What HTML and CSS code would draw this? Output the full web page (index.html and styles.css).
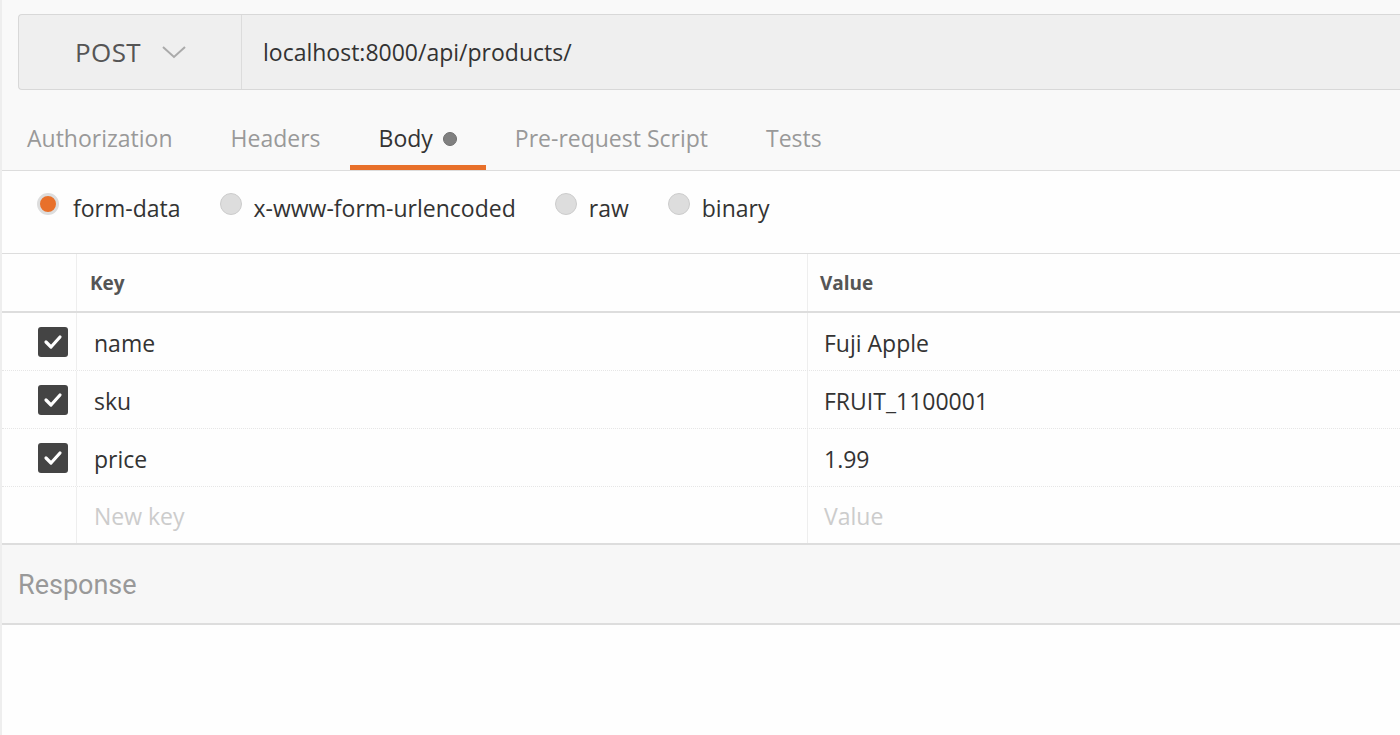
FILE: index.html
```html
<!DOCTYPE html>
<html>
<head>
<meta charset="utf-8">
<link rel="stylesheet" href="styles.css">
</head>
<body>
<div class="app">
  <div class="top">
    <div class="urlbar">
      <div class="method">
        <span>POST</span>
        <svg class="chev" width="26" height="16" viewBox="0 0 26 16"><path d="M2 3 L13 13 L24 3" fill="none" stroke="#aaa" stroke-width="2"/></svg>
      </div>
      <div class="url">localhost:8000/api/products/</div>
    </div>
    <div class="tabs">
      <div class="tab">Authorization</div>
      <div class="tab">Headers</div>
      <div class="tab active">Body <span class="dot"></span></div>
      <div class="tab">Pre-request Script</div>
      <div class="tab">Tests</div>
    </div>
  </div>
  <div class="radios">
    <label class="radio"><span class="rb on"></span>form-data</label>
    <label class="radio"><span class="rb"></span>x-www-form-urlencoded</label>
    <label class="radio"><span class="rb"></span>raw</label>
    <label class="radio"><span class="rb"></span>binary</label>
  </div>
  <div class="table">
    <div class="row head">
      <div class="c0"></div>
      <div class="c1">Key</div>
      <div class="c2">Value</div>
    </div>
    <div class="row">
      <div class="c0"><span class="cb"><svg width="20" height="16" viewBox="0 0 20 16"><path d="M3 8 L8 13 L17 3" fill="none" stroke="#fff" stroke-width="3.2" stroke-linecap="round" stroke-linejoin="round"/></svg></span></div>
      <div class="c1">name</div>
      <div class="c2">Fuji Apple</div>
    </div>
    <div class="row">
      <div class="c0"><span class="cb"><svg width="20" height="16" viewBox="0 0 20 16"><path d="M3 8 L8 13 L17 3" fill="none" stroke="#fff" stroke-width="3.2" stroke-linecap="round" stroke-linejoin="round"/></svg></span></div>
      <div class="c1">sku</div>
      <div class="c2">FRUIT_1100001</div>
    </div>
    <div class="row">
      <div class="c0"><span class="cb"><svg width="20" height="16" viewBox="0 0 20 16"><path d="M3 8 L8 13 L17 3" fill="none" stroke="#fff" stroke-width="3.2" stroke-linecap="round" stroke-linejoin="round"/></svg></span></div>
      <div class="c1">price</div>
      <div class="c2">1.99</div>
    </div>
    <div class="row last">
      <div class="c0"></div>
      <div class="c1 ph">New key</div>
      <div class="c2 ph">Value</div>
    </div>
  </div>
  <div class="response">Response</div>
  <div class="rest"></div>
</div>
</body>
</html>
```

FILE: styles.css
```css
* { box-sizing: border-box; }
html, body { margin: 0; padding: 0; }
body {
  width: 1400px;
  height: 735px;
  overflow: hidden;
  background: #fefefe;
  font-family: "Open Sans", "Liberation Sans", sans-serif;
  color: #333;
}
.app { display: flex; flex-direction: column; height: 735px; border-left: 2px solid #eee; }
.top {
  background: #f9f9f9;
  padding-top: 14px;
  padding-left: 16px;
  border-bottom: 1px solid #ddd;
}
.urlbar {
  display: flex;
  height: 76px;
  border: 1px solid #d8d8d8;
  border-right: none;
  border-radius: 4px 0 0 4px;
  background: #efefef;
}
.method {
  width: 223px;
  border-right: 1px solid #dcdcdc;
  display: flex;
  align-items: center;
  padding-left: 56px;
  gap: 20px;
  font-size: 26px;
  letter-spacing: 0.4px;
  color: #555;
}
.url {
  display: flex;
  align-items: center;
  padding-left: 21px;
  font-size: 23px;
  color: #333;
}
.tabs {
  display: flex;
  height: 80px;
  margin-left: -16px;
}
.tab {
  font-size: 23px;
  line-height: 32px;
  color: #999;
  padding: 32px 29px 0;
  height: 80px;
  display: flex;
  align-items: flex-start;
}
.tab:first-child { padding-left: 25px; }
.tab.active {
  color: #333;
  border-bottom: 5px solid #e8702a;
}
.dot {
  display: inline-block;
  width: 14px;
  height: 14px;
  border-radius: 50%;
  background: #808080;
  border: 1px solid #6f6f6f;
  margin-left: 10px;
  margin-top: 10px;
}
.radios {
  display: flex;
  align-items: center;
  height: 83px;
  padding-left: 35px;
  padding-bottom: 8px;
  border-bottom: 1px solid #ddd;
  background: #fefefe;
}
.radio {
  display: flex;
  align-items: center;
  font-size: 23px;
  color: #333;
  margin-right: 39px;
}
.rb {
  width: 22px;
  height: 22px;
  border-radius: 50%;
  background: #ddd;
  border: 1px solid #ccc;
  margin-right: 12px;
  margin-top: -9px;
}
.rb.on { background: #e8702a; border: 3px solid #ddd; margin-right: 14px; }
.table { display: flex; flex-direction: column; }
.row {
  display: flex;
  height: 58px;
  border-bottom: 1px dotted #e6e6e6;
}
.row.head { height: 59px; border-bottom: 2px solid #ddd; }
.row.last { border-bottom: 2px solid #ddd; }
.c0 {
  width: 75px;
  border-right: 1px solid #eee;
  display: flex;
  align-items: center;
  padding-left: 36px;
}
.c1 {
  width: 731px;
  border-right: 1px solid #eee;
  display: flex;
  align-items: center;
  padding-left: 17px;
  padding-top: 2px;
  font-size: 23px;
  color: #333;
}
.c2 {
  flex: 1;
  display: flex;
  align-items: center;
  padding-left: 16px;
  padding-top: 2px;
  font-size: 23px;
  color: #333;
}
.head .c1, .head .c2 { font-size: 19px; font-weight: 700; color: #555; padding-left: 13px; padding-top: 0; }
.head .c2 { padding-left: 12px; }
.ph { color: #ccc; }
.cb {
  width: 30px;
  height: 30px;
  border-radius: 3px;
  background: #444;
  display: flex;
  align-items: center;
  justify-content: center;
}
.response {
  height: 80px;
  background: #f7f7f7;
  border-bottom: 2px solid #ddd;
  display: flex;
  align-items: center;
  padding-left: 16px;
  padding-top: 2px;
  font-family: Roboto, "Open Sans", sans-serif;
  font-size: 27px;
  color: #999;
}
.rest { flex: 1; background: #fefefe; }
```
